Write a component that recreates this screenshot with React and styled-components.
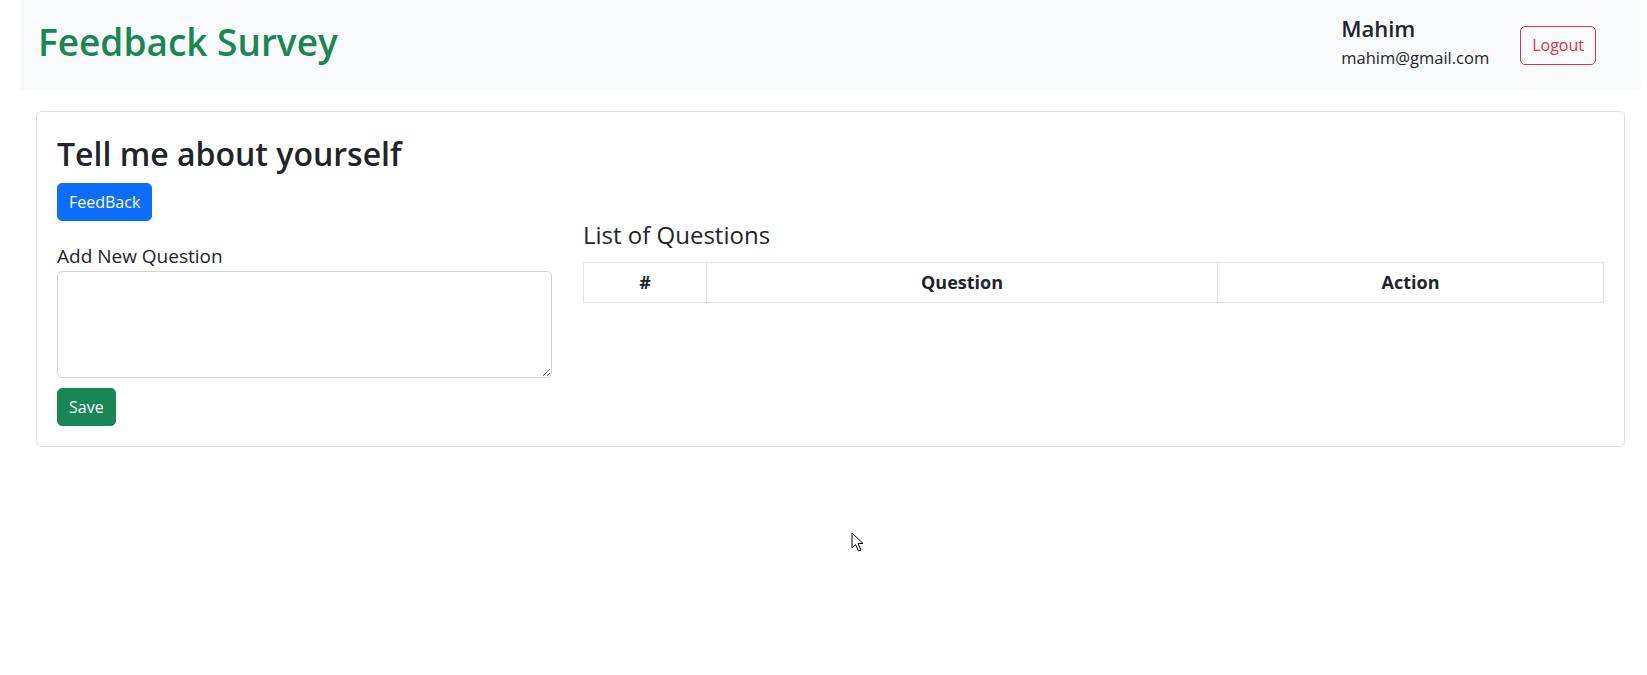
import React, { useState } from 'react';
import styled, { createGlobalStyle } from 'styled-components';

const GlobalStyle = createGlobalStyle`
  body {
    margin: 0;
    background: #fff;
    font-family: "Open Sans", "Noto Sans", sans-serif;
    color: #212529;
  }
  * { box-sizing: border-box; }
`;

const App = () => {
    const [question, setQuestion] = useState('');
    const questions = [];

    return (
        <Page>
            <GlobalStyle />
            <Navbar>
                <Brand>Feedback Survey</Brand>
                <UserArea>
                    <UserInfo>
                        <UserName>Mahim</UserName>
                        <UserEmail>mahim@gmail.com</UserEmail>
                    </UserInfo>
                    <OutlineButton>Logout</OutlineButton>
                </UserArea>
            </Navbar>

            <Main>
                <Card>
                    <Heading>Tell me about yourself</Heading>
                    <Button $color="#0d6efd">FeedBack</Button>

                    <Row>
                        <FormColumn>
                            <Label htmlFor="question">Add New Question</Label>
                            <TextArea
                                id="question"
                                value={question}
                                onChange={(e) => setQuestion(e.target.value)}
                            />
                            <Button $color="#198754">Save</Button>
                        </FormColumn>

                        <div>
                            <SubHeading>List of Questions</SubHeading>
                            <Table>
                                <thead>
                                    <tr>
                                        <Th $width="123px">#</Th>
                                        <Th $width="511px">Question</Th>
                                        <Th>Action</Th>
                                    </tr>
                                </thead>
                                <tbody>
                                    {questions.map((q, i) => (
                                        <tr key={i}>
                                            <Td>{i + 1}</Td>
                                            <Td>{q}</Td>
                                            <Td />
                                        </tr>
                                    ))}
                                </tbody>
                            </Table>
                        </div>
                    </Row>
                </Card>
            </Main>

            <Cursor width="14" height="21" viewBox="0 0 14 21">
                <path d="M1 1 L1 16 L4.5 12.5 L7.5 19 L10 18 L7 11.5 L12 11.5 Z" fill="#fff" stroke="#000" strokeWidth="1" strokeLinejoin="round" />
            </Cursor>
        </Page>
    );
};

export default App;

// Styled Components

const Page = styled.div`
  position: relative;
  min-height: 675px;
  padding: 0 6px 0 21px;
`;

const Navbar = styled.nav`
  height: 90px;
  background-color: #f8f9fa;
  display: flex;
  align-items: center;
  justify-content: space-between;
  padding: 0 45px 0 17px;
`;

const Brand = styled.h1`
  margin: 0 0 6px;
  font-size: 37px;
  font-weight: 600;
  line-height: 1.2;
  color: #198754;
`;

const UserArea = styled.div`
  display: flex;
  align-items: center;
  gap: 31px;
`;

const UserInfo = styled.div`
  display: flex;
  flex-direction: column;
  margin-bottom: 4px;
`;

const UserName = styled.div`
  font-size: 22px;
  font-weight: 600;
  line-height: 1.25;
`;

const UserEmail = styled.div`
  font-size: 16.5px;
  line-height: 1.5;
  margin-top: 4px;
`;

const OutlineButton = styled.button`
  height: 39px;
  padding: 0 11px;
  font-family: inherit;
  font-size: 16px;
  color: #dc3545;
  background: transparent;
  border: 1px solid #dc3545;
  border-radius: 5px;
  cursor: pointer;
`;

const Main = styled.main`
  padding: 21px 16px 0 15px;
`;

const Card = styled.div`
  border: 1px solid #dfe0e1;
  border-radius: 6px;
  padding: 20px;
  background: #fff;
`;

const Heading = styled.h2`
  margin: 0 0 8px;
  font-size: 32px;
  font-weight: 600;
  line-height: 1.35;
`;

const Button = styled.button`
  display: inline-block;
  height: 38px;
  padding: 0 11px;
  font-family: inherit;
  font-size: 16px;
  color: #fff;
  background-color: ${({ $color }) => $color};
  border: 1px solid ${({ $color }) => $color};
  border-radius: 5px;
  cursor: pointer;
`;

const Row = styled.div`
  display: grid;
  grid-template-columns: 495px 1fr;
  column-gap: 31px;
`;

const FormColumn = styled.div`
  display: flex;
  flex-direction: column;
  align-items: flex-start;
  padding-top: 23px;
`;

const Label = styled.label`
  font-size: 19px;
  line-height: 1.3;
  margin-bottom: 2px;
`;

const TextArea = styled.textarea`
  width: 100%;
  height: 107px;
  margin-bottom: 10px;
  padding: 6px 12px;
  font-family: inherit;
  font-size: 16px;
  border: 1px solid #ced4da;
  border-radius: 5px;
  resize: vertical;
`;

const SubHeading = styled.h4`
  margin: 0 0 12px;
  font-size: 24px;
  font-weight: 500;
  line-height: 1.2;
`;

const Table = styled.table`
  width: 100%;
  border-collapse: collapse;
`;

const Th = styled.th`
  width: ${({ $width }) => $width || 'auto'};
  height: 40px;
  padding: 0 8px;
  font-size: 18px;
  font-weight: 700;
  text-align: center;
  border: 1px solid #dee2e6;
`;

const Td = styled.td`
  padding: 8px;
  border: 1px solid #dee2e6;
`;

const Cursor = styled.svg`
  position: absolute;
  left: 851px;
  top: 532px;
  pointer-events: none;
`;
